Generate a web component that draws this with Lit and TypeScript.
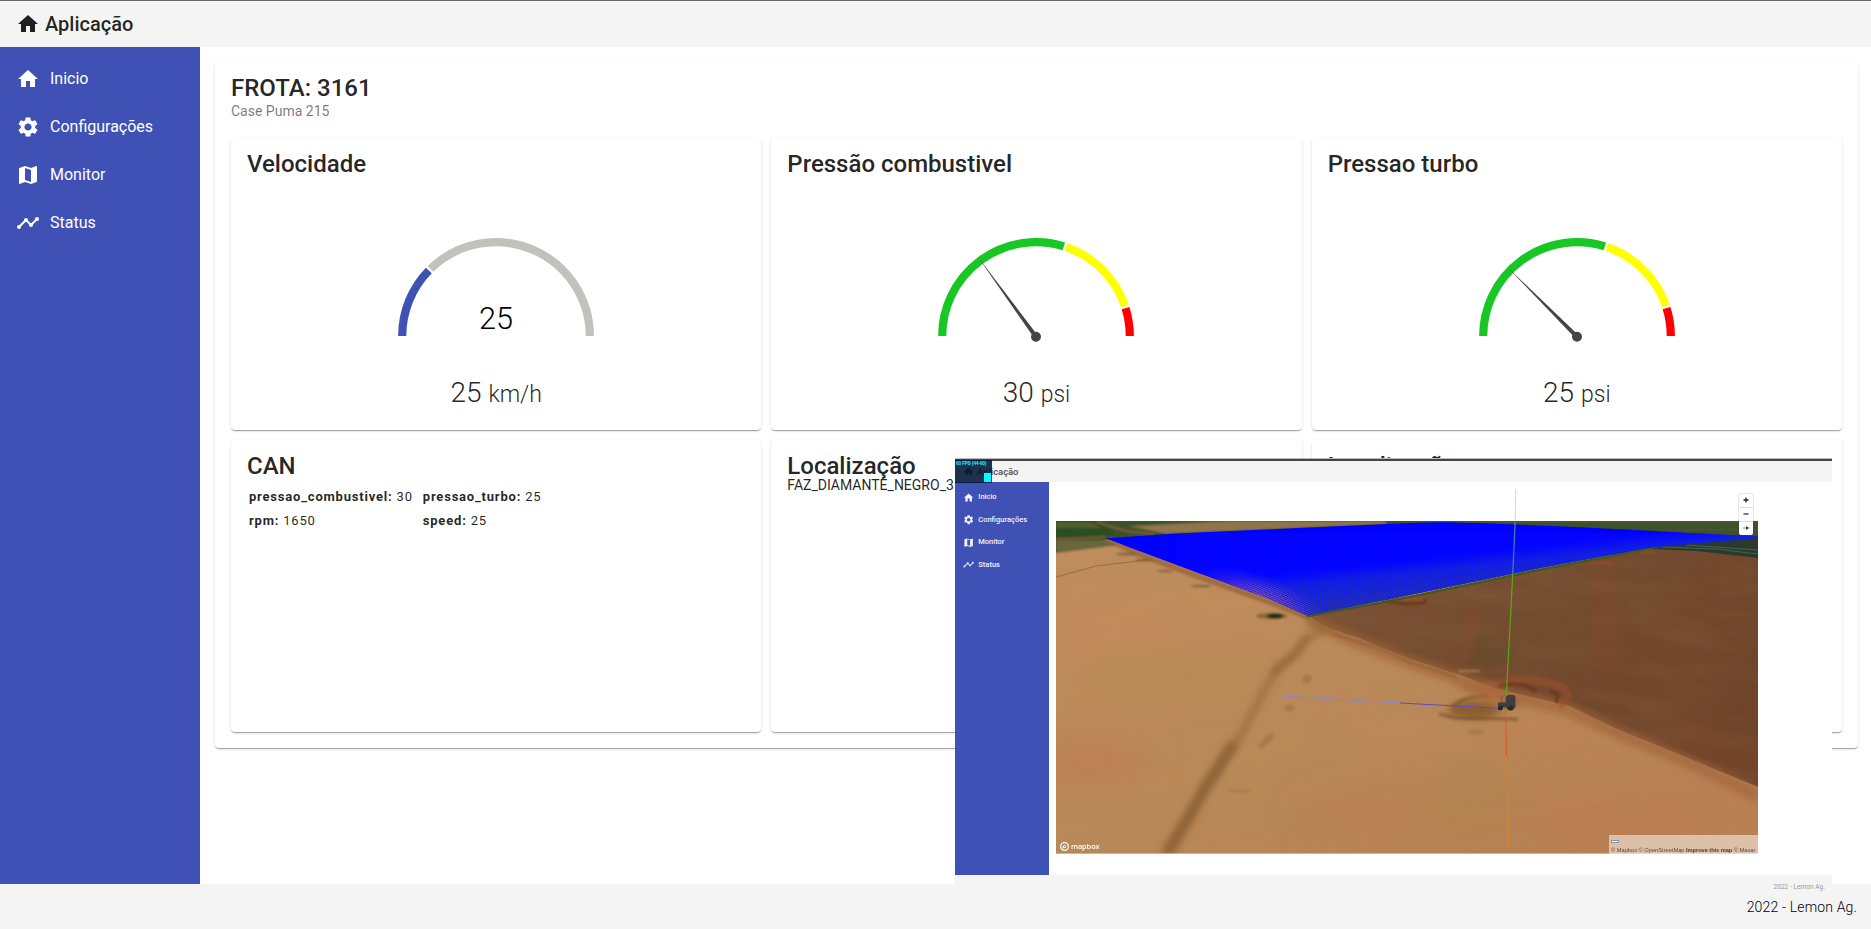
import { LitElement, html, css, svg } from "lit";
import { customElement, property } from "lit/decorators.js";

const ICONS: Record<string, string> = {
  home: "M10 20v-6h4v6h5v-8h3L12 3 2 12h3v8z",
  settings:
    "M19.14 12.94c.04-.3.06-.61.06-.94 0-.32-.02-.64-.07-.94l2.03-1.58c.18-.14.23-.41.12-.61l-1.92-3.32c-.12-.22-.37-.29-.59-.22l-2.39.96c-.5-.38-1.03-.7-1.62-.94l-.36-2.54c-.04-.24-.24-.41-.48-.41h-3.84c-.24 0-.43.17-.47.41l-.36 2.54c-.59.24-1.13.57-1.62.94l-2.39-.96c-.22-.08-.47 0-.59.22L2.74 8.87c-.12.21-.08.47.12.61l2.03 1.58c-.05.3-.09.63-.09.94s.02.64.07.94l-2.03 1.58c-.18.14-.23.41-.12.61l1.92 3.32c.12.22.37.29.59.22l2.39-.96c.5.38 1.03.7 1.62.94l.36 2.54c.05.24.24.41.48.41h3.84c.24 0 .44-.17.47-.41l.36-2.54c.59-.24 1.13-.56 1.62-.94l2.39.96c.22.08.47 0 .59-.22l1.92-3.32c.12-.22.07-.47-.12-.61l-2.01-1.58zM12 15.6c-1.98 0-3.6-1.62-3.6-3.6s1.62-3.6 3.6-3.6 3.6 1.62 3.6 3.6-1.62 3.6-3.6 3.6z",
  map: "M20.5 3l-.16.03L15 5.1 9 3 3.36 4.9c-.21.07-.36.25-.36.48V20.5c0 .28.22.5.5.5l.16-.03L9 18.9l6 2.1 5.64-1.9c.21-.07.36-.25.36-.48V3.5c0-.28-.22-.5-.5-.5zM15 19l-6-2.11V5l6 2.11V19z",
  timeline:
    "M23 8c0 1.1-.9 2-2 2-.18 0-.35-.02-.51-.07l-3.56 3.55c.05.16.07.34.07.52 0 1.1-.9 2-2 2s-2-.9-2-2c0-.18.02-.36.07-.52l-2.55-2.55c-.16.05-.34.07-.52.07s-.36-.02-.52-.07l-4.55 4.56c.05.16.07.33.07.51 0 1.1-.9 2-2 2s-2-.9-2-2 .9-2 2-2c.18 0 .35.02.51.07l4.56-4.55C8.02 9.36 8 9.18 8 9c0-1.1.9-2 2-2s2 .9 2 2c0 .18-.02.36-.07.52l2.55 2.55c.16-.05.34-.07.52-.07s.36.02.52.07l3.55-3.56C19.02 8.35 19 8.18 19 8c0-1.1.9-2 2-2s2 .9 2 2z",
};

const NAV = [
  { icon: "home", label: "Inicio" },
  { icon: "settings", label: "Configurações" },
  { icon: "map", label: "Monitor" },
  { icon: "timeline", label: "Status" },
];

@customElement("app-icon")
export class AppIcon extends LitElement {
  @property() name = "home";
  static styles = css`
    :host { display: block; width: 24px; height: 24px; flex: none; }
    svg { display: block; width: 100%; height: 100%; fill: currentColor; }
  `;
  render() {
    return html`<svg viewBox="0 0 24 24"><path d=${ICONS[this.name]}></path></svg>`;
  }
}

interface Segment { from: number; to: number; color: string }

@customElement("arc-gauge")
export class ArcGauge extends LitElement {
  @property({ attribute: false }) segments: Segment[] = [];
  @property({ type: Number }) value = 0;
  @property({ type: Boolean }) digital = false;
  static styles = css`
    :host { display: block; width: 200px; height: 110px; }
    svg { display: block; }
    .digits { font-family: Roboto, sans-serif; font-weight: 300; font-size: 32px; fill: #000; }
  `;
  private point(pct: number, r: number) {
    const a = Math.PI * (1 - pct / 100);
    return [100 + r * Math.cos(a), 100 - r * Math.sin(a)];
  }
  private arc(s: Segment) {
    const pad = 0.4;
    const [x1, y1] = this.point(s.from + (s.from > 0 ? pad : 0), 93.8);
    const [x2, y2] = this.point(s.to - (s.to < 100 ? pad : 0), 93.8);
    return svg`<path d="M${x1} ${y1}A93.8 93.8 0 0 1 ${x2} ${y2}" fill="none" stroke=${s.color} stroke-width="8.2"></path>`;
  }
  render() {
    return html`<svg width="200" height="110" viewBox="0 0 200 110">
      ${this.segments.map((s) => this.arc(s))}
      ${this.digital
        ? svg`<text class="digits" x="83" y="93" textLength="34" lengthAdjust="spacingAndGlyphs">${this.value}</text>`
        : svg`<g fill="#444" transform="rotate(${this.value * 1.8 - 90} 100 100.8)">
            <path d="M97.8 100.8L100 1.8L102.2 100.8z"></path><circle cx="100" cy="100.8" r="5"></circle></g>`}
    </svg>`;
  }
}

@customElement("field-map")
export class FieldMap extends LitElement {
  static styles = css`
    :host { display: block; position: relative; width: 702px; height: 333px; }
    svg { display: block; overflow: visible; }
    .controls {
      position: absolute; right: 4.5px; top: -27.5px; width: 14px; height: 41px;
      background: #fff; border-radius: 2px; box-shadow: 0 0 0 1px rgba(0, 0, 0, 0.1);
      display: grid; grid-template-rows: repeat(3, 1fr);
    }
    .controls span { display: grid; place-items: center; }
    .controls span + span { border-top: 1px solid #ddd; }
    .brand {
      position: absolute; left: 4px; bottom: 3px; display: flex; align-items: center; gap: 2px;
      font: 600 7.4px/10px "Open Sans", sans-serif; color: #fff; letter-spacing: -0.1px;
    }
    .credits {
      position: absolute; right: 0; bottom: 0; width: 149px; height: 19px; box-sizing: border-box;
      padding: 5px 2px 0; background: rgba(255, 255, 255, 0.5);
      font: 5.7px/8px "Liberation Sans", sans-serif; color: #5a4a3e; white-space: nowrap;
    }
    .chip { width: 6px; height: 1.4px; border: 0.8px solid #7f98a8; background: #fff; margin-bottom: 2.2px; }
    .credits b { color: #4a3c32; font-weight: 700; letter-spacing: -0.06px; }
  `;
  render() {
    return html`<svg width="702" height="333" viewBox="0 0 702 333">
        <defs>
          <clipPath id="frame"><rect width="702" height="333"></rect></clipPath>
          <clipPath id="soilClip"><path d="M251 94L344 77L487 47L594 27L702 30V266L620 232L561 208L511 184L441 168L407 155L354 138L300 116L277 110Z"></path></clipPath>
          <clipPath id="fieldClip"><path d="M50 17.3L120 12.5L354 2L385 1.3L430 2.3L530 6.5L701 15.5V17L594 26.5L487 46.5L344 76L251 94.5L211 77L141 51.5L75 27Z"></path></clipPath>
          <linearGradient id="sand" x1="0" y1="0" x2=".8" y2="1">
            <stop offset="0" stop-color="#c08d5e"></stop><stop offset=".3" stop-color="#bf8c5c"></stop>
            <stop offset=".6" stop-color="#b98958"></stop><stop offset="1" stop-color="#ba8153"></stop>
          </linearGradient>
          <linearGradient id="soil" x1="0" y1="0" x2="1" y2=".6">
            <stop offset="0" stop-color="#7c5234"></stop><stop offset=".5" stop-color="#734c2f"></stop>
            <stop offset="1" stop-color="#70452c"></stop>
          </linearGradient>
          <linearGradient id="fade" gradientUnits="userSpaceOnUse" x1="318" y1="42" x2="323" y2="88">
            <stop offset="0" stop-color="#1c38c4" stop-opacity="0"></stop>
            <stop offset=".3" stop-color="#2444b0" stop-opacity=".6"></stop>
            <stop offset="1" stop-color="#34447c" stop-opacity="1"></stop>
          </linearGradient>
          <radialGradient id="violet" gradientUnits="userSpaceOnUse" cx="0" cy="0" r="1" gradientTransform="translate(206 80) rotate(20) scale(72 26)">
            <stop offset="0" stop-color="#b0648c" stop-opacity="1"></stop>
            <stop offset=".5" stop-color="#8a5aa8" stop-opacity=".6"></stop>
            <stop offset="1" stop-color="#3a38e0" stop-opacity="0"></stop>
          </radialGradient>
          <pattern id="mesh" width="3.6" height="3" patternUnits="userSpaceOnUse" patternTransform="skewX(28) rotate(-8)">
            <path d="M0 0L3.6 3" stroke="#0a0aff" stroke-width="1"></path>
          </pattern>
          <filter id="b1" x="-50%" y="-50%" width="200%" height="200%"><feGaussianBlur stdDeviation="1.2"></feGaussianBlur></filter>
          <filter id="b3" x="-50%" y="-50%" width="200%" height="200%"><feGaussianBlur stdDeviation="3.4"></feGaussianBlur></filter>
          <filter id="b12" x="-50%" y="-50%" width="200%" height="200%"><feGaussianBlur stdDeviation="14"></feGaussianBlur></filter>
          <filter id="grainA" x="0" y="0" width="100%" height="100%">
            <feTurbulence type="fractalNoise" baseFrequency=".009 .045" numOctaves="3" seed="7"></feTurbulence>
            <feColorMatrix values="0 0 0 0 .42  0 0 0 0 .25  0 0 0 0 .12  1.1 0 0 0 -.4"></feColorMatrix>
          </filter>
        </defs>
        <g clip-path="url(#frame)">
          <rect width="702" height="333" fill="url(#sand)"></rect>
          <g filter="url(#b12)">
            <ellipse cx="20" cy="240" rx="80" ry="30" fill="#c07f53" opacity=".6"></ellipse>
            <ellipse cx="30" cy="110" rx="90" ry="30" fill="#c68a5c" opacity=".7"></ellipse>
            <ellipse cx="110" cy="155" rx="90" ry="22" fill="#b68a52" opacity=".6"></ellipse>
            <ellipse cx="340" cy="210" rx="60" ry="16" fill="#c2865b" opacity=".7"></ellipse>
            <ellipse cx="300" cy="290" rx="60" ry="20" fill="#bb8155" opacity=".6"></ellipse>
            <ellipse cx="420" cy="290" rx="50" ry="35" fill="#b08350" opacity=".6"></ellipse>
            <ellipse cx="550" cy="300" rx="90" ry="25" fill="#bb7e51" opacity=".7"></ellipse>
            <ellipse cx="490" cy="215" rx="60" ry="14" fill="#c28255" opacity=".7"></ellipse>
          </g>
          <rect x="-150" y="-60" width="1000" height="600" filter="url(#grainA)" opacity=".3" transform="rotate(-17 200 160)"></rect>
          <path d="M0 0H702V30L560 34L50 19L0 31Z" fill="#3b522b"></path>
          <path d="M72 5L170 0H330V3L110 13Z" fill="#8f7449" filter="url(#b1)"></path>
          <path d="M0 0H40L60 12L50 18H0Z" fill="#2c4d22" filter="url(#b1)"></path>
          <path d="M0 1H36L46 7H0Z" fill="#525d2d" filter="url(#b1)"></path>
          <path d="M0 19H50L62 24L0 32Z" fill="#69663a" filter="url(#b1)"></path>
          <path d="M40 1L70 10L98 13M0 18L50 16" fill="none" stroke="#8c5c34" stroke-width="2" filter="url(#b1)"></path>
          <path d="M400 1H702M600 9H702" stroke="#6d5630" stroke-width="1" opacity=".7"></path>
          <path d="M52 18L78 31L141 55L211 80L254 97" fill="none" stroke="#8a5930" stroke-width="6" opacity=".6" filter="url(#b1)"></path>
          <g clip-path="url(#soilClip)">
            <path d="M240 94L344 70L594 22H702V280L561 208L441 168L354 138Z" fill="url(#soil)"></path>
            <path d="M530 30L560 25L568 150L540 150Z" fill="#7d4a2f" opacity=".5" filter="url(#b3)"></path>
            <ellipse cx="430" cy="130" rx="30" ry="16" fill="#62492a" opacity=".5" filter="url(#b3)"></ellipse>
            <path d="M410 90L425 90L415 140L395 145Z" fill="#824b31" opacity=".5" filter="url(#b3)"></path>
            <path d="M560 130L640 250L702 270V240Z" fill="#784529" opacity=".5" filter="url(#b12)"></path>
            <rect x="200" y="-40" width="600" height="400" filter="url(#grainA)" opacity=".22" transform="rotate(8 450 130)"></rect>
          </g>
          <path d="M594 28L620 23L702 15V37L640 30Z" fill="#2a3a2c"></path>
          <path d="M606 26L660 28L702 33M630 24L702 29" fill="none" stroke="#4c6a62" stroke-width="1.1" opacity=".8"></path>
          <path d="M252 98L290 116L354 141L407 159L441 171L511 188L561 211L640 244L704 276" fill="none" stroke="#a0643a" stroke-width="14" opacity=".65" filter="url(#b3)"></path>
          <path d="M275 112L325 128L354 141L400 156" fill="none" stroke="#83592f" stroke-width="2.5" opacity=".5" filter="url(#b1)"></path>
          <path d="M254 96L270 108L250 118L240 132L222 147L208 170L186 212L168 238L145 275L108 333" fill="none" stroke="#845a2c" stroke-width="9" opacity=".38" filter="url(#b3)"></path>
          <path d="M178 222L150 265L132 298L112 333" fill="none" stroke="#7b5329" stroke-width="12" opacity=".5" filter="url(#b3)"></path>
          <path d="M252 115L240 132L216 153" fill="none" stroke="#7d5428" stroke-width="6" opacity=".4" filter="url(#b3)"></path>
          <g fill="#80582c" opacity=".3" filter="url(#b1)">
            <ellipse cx="251" cy="158" rx="5" ry="4"></ellipse><ellipse cx="233" cy="187" rx="5" ry="3.4"></ellipse>
            <ellipse cx="210" cy="220" rx="10" ry="3" transform="rotate(-45 210 220)"></ellipse>
            <ellipse cx="420" cy="211" rx="8" ry="2.4"></ellipse><ellipse cx="184" cy="270" rx="12" ry="2" opacity=".6"></ellipse>
          </g>
          <g fill="#74522a" opacity=".6" filter="url(#b1)">
            <ellipse cx="70" cy="33" rx="10" ry="1.8"></ellipse><ellipse cx="88" cy="39" rx="9" ry="1.6"></ellipse>
            <ellipse cx="109" cy="50" rx="8" ry="1.5"></ellipse><ellipse cx="145" cy="65" rx="10" ry="1.6"></ellipse>
          </g>
          <path d="M0 56L40 45L90 39" fill="none" stroke="#7d5a34" stroke-width="1" opacity=".6"></path>
          <ellipse cx="216" cy="95" rx="16" ry="3.2" fill="#6a5528" opacity=".6" filter="url(#b1)"></ellipse>
          <ellipse cx="219" cy="95" rx="8" ry="2" fill="#1c2a16" filter="url(#b1)"></ellipse>
          <g fill="none" filter="url(#b1)">
            <path d="M330 80L350 83L368 82L370 78" stroke="#6b2f18" stroke-width="1.8"></path>
            <path d="M326 78L365 77" stroke="#96502c" stroke-width="2.5"></path>
            <path d="M532 41L558 42M585 31L600 31" stroke="#9c4a24" stroke-width="1.6"></path>
            <path d="M436 164Q470 152 505 166Q520 176 503 184" stroke="#97502f" stroke-width="8" opacity=".6"></path>
            <path d="M442 166Q462 158 480 170M494 170L502 174L500 182" stroke="#6b3219" stroke-width="2.6" opacity=".85"></path>
            <path d="M396 186Q410 174 432 175M383 193L400 197L462 198" stroke="#6e4722" stroke-width="3.6" opacity=".5"></path>
            <path d="M402 150L424 150" stroke="#b58a54" stroke-width="3.4" opacity=".5"></path>
          </g>
          <ellipse cx="418" cy="189" rx="26" ry="9" fill="#75491f" opacity=".65" filter="url(#b3)"></ellipse>
          <path d="M400 164L436 160L470 182L440 190Z" fill="#a9683a" opacity=".6" filter="url(#b3)"></path>
          <path d="M251 95.5L344 78L487 48.2L598 27" fill="none" stroke="#3f5a1c" stroke-width="2"></path>
          <g clip-path="url(#fieldClip)">
            <rect width="702" height="100" fill="#0000ff"></rect>
            <path d="M50 50L360 30L480 20L600 10L702 8V100H50Z" fill="url(#fade)"></path>
            <rect x="50" y="0" width="300" height="100" fill="url(#violet)"></rect>
            <rect x="120" y="12" width="582" height="90" fill="url(#mesh)"></rect>
          </g>
          <rect y="332" width="702" height="1" fill="#e3c4a6" opacity=".7"></rect>
        </g>
        <path d="M459.8 -32L459.2 0" stroke="#b9f57e" stroke-width="1"></path>
        <path d="M459.2 0L456.8 53" stroke="#3f93a8" stroke-width="1.1"></path>
        <path d="M456.8 53L450 180" stroke="#5fa51a" stroke-width="1.2"></path>
        <path d="M226 175L344 182" stroke="#8a84d0" stroke-width="1"></path>
        <path d="M344 182L447 187.5" stroke="#6448c4" stroke-width="1"></path>
        <path d="M449.6 188L450.5 235" stroke="#de5428" stroke-width="1"></path>
        <path d="M450.5 235L452.8 327" stroke="#d6842a" stroke-width="1"></path>
        <g fill="#3c3e42">
          <path d="M450 175.5L452 174H458L459.5 176V186L457 189H452L450 186.5H446L444 189H442V181.5H449.5Z"></path>
          <rect x="445.4" y="174.5" width=".8" height="7" fill="#76553c"></rect>
          <circle cx="444.6" cy="187" r="2.4" fill="#26282b"></circle><circle cx="454.5" cy="187" r="2.6" fill="#26282b"></circle>
        </g>
      </svg>
      <div class="controls">
        <span><svg width="6" height="6"><path d="M3 .5v5M.5 3h5" stroke="#222" stroke-width="1.3"></path></svg></span>
        <span><svg width="6" height="6"><path d="M.5 3h5" stroke="#333" stroke-width="1.3"></path></svg></span>
        <span><svg width="8" height="6"><path d="M0 3L3.6 1.4v3.2z" fill="#bbb"></path><path d="M7.4 3L4 1.2v3.6z" fill="#333"></path></svg></span>
      </div>
      <div class="brand">
        <svg width="9" height="9" viewBox="0 0 9 9"><circle cx="4.5" cy="4.5" r="3.8" fill="#8c6a4c" fill-opacity=".5" stroke="#fff" stroke-width="1.3"></circle><path d="M2.6 6.4Q2 3 5 2.4Q7 3 6.2 5.2Q5 6.8 2.6 6.4z" fill="#fff"></path><circle cx="4.8" cy="4.2" r=".8" fill="#8c6a4c"></circle></svg>
        <span>mapbox</span>
      </div>
      <div class="credits"><div class="chip"></div>© Mapbox © OpenStreetMap <b>Improve this map</b> © Maxar</div>`;
  }
}

@customElement("monitor-window")
export class MonitorWindow extends LitElement {
  static styles = css`
    :host { display: flex; flex-direction: column; width: 877px; height: 437px; background: #fff; }
    .top {
      position: relative; height: 24px; box-sizing: border-box; background: #f4f4f4;
      border-top: 1px solid #bbb; box-shadow: inset 0 2px 0 #454248; display: flex; align-items: center;
      gap: 3px; padding: 2px 0 0 8px; font: 500 9.4px/12px Roboto, sans-serif; color: #4c4c4c;
    }
    .top app-icon { width: 11px; height: 11px; }
    .stats {
      position: absolute; left: 0; top: 1px; width: 37px; height: 23px; background: rgba(0, 20, 50, 0.87);
      font: 900 4.6px/5px "Liberation Sans", sans-serif; color: #0ff; white-space: nowrap;
    }
    .stats span { display: block; padding: 1px 0 0 1px; letter-spacing: -0.08px; }
    .stats i { position: absolute; right: 1px; bottom: 1px; width: 7px; height: 9px; background: #0ff; }
    .body { display: flex; height: 392.5px; }
    nav { width: 93.7px; background: #3f51b5; padding-top: 4px; box-sizing: border-box; }
    .item {
      display: flex; align-items: center; gap: 4.5px; height: 22.5px; padding-left: 7.5px;
      font: 500 7.5px/10px Roboto, sans-serif; color: #f0f1fa;
    }
    .item app-icon { width: 11.3px; height: 11.3px; }
    field-map { margin: 39px 0 0 7.3px; }
    .foot {
      flex: 1; background: #f4f4f4; text-align: right; padding: 5px 7px 0 0;
      font: 6.6px/14px Roboto, sans-serif; color: #999;
    }
  `;
  render() {
    return html`<div class="top"><app-icon name="home"></app-icon>Aplicação
        <div class="stats"><span>60 FPS (44-60)</span><i></i></div></div>
      <div class="body">
        <nav>${NAV.map((n) => html`<div class="item"><app-icon name=${n.icon}></app-icon>${n.label}</div>`)}</nav>
        <field-map></field-map>
      </div>
      <div class="foot">2022 - Lemon Ag.</div>`;
  }
}

const PRESSURE: Segment[] = [
  { from: 0, to: 60, color: "#18c723" },
  { from: 60, to: 90, color: "#ffff00" },
  { from: 90, to: 100, color: "#ff0000" },
];
const SPEED: Segment[] = [
  { from: 0, to: 25, color: "#3f51b5" },
  { from: 25, to: 100, color: "#c2c1bc" },
];
const GAUGES = [
  { title: "Velocidade", value: 25, unit: "km/h", segments: SPEED, digital: true },
  { title: "Pressão combustivel", value: 30, unit: "psi", segments: PRESSURE, digital: false },
  { title: "Pressao turbo", value: 25, unit: "psi", segments: PRESSURE, digital: false },
];
const CAN = [
  ["pressao_combustivel", "30"],
  ["pressao_turbo", "25"],
  ["rpm", "1650"],
  ["speed", "25"],
];

@customElement("app-root")
export class AppRoot extends LitElement {
  static styles = css`
    :host {
      display: grid; grid-template-rows: 47px 1fr 45px; height: 100vh; position: relative; overflow: hidden;
      font-family: Roboto, sans-serif; color: rgba(0, 0, 0, 0.87); background: #fff;
    }
    header {
      box-sizing: border-box; border-top: 1px solid #6a666a; background: #f4f4f4; display: flex; align-items: center;
      gap: 5px; padding-left: 16px; font: 500 20px/24px Roboto, sans-serif;
    }
    .shell { display: flex; min-height: 0; }
    nav { width: 200px; background: #3f51b5; padding-top: 7.5px; box-sizing: border-box; color: #fff; flex: none; }
    .item { display: flex; align-items: center; gap: 10px; height: 48px; padding-left: 16px; font-size: 16px; }
    main { flex: 1; padding: 15px 13px 0 15px; }
    .card {
      border-radius: 4px; background: #fff; padding: 16px; box-sizing: border-box;
      box-shadow: 0 2px 1px -1px rgba(0, 0, 0, 0.2), 0 1px 1px 0 rgba(0, 0, 0, 0.14), 0 1px 3px 0 rgba(0, 0, 0, 0.12);
    }
    .fleet { height: 686px; }
    h2 { margin: 0; font: 500 24px/20px Roboto, sans-serif; }
    .sub { font-size: 14px; line-height: 20px; color: rgba(0, 0, 0, 0.54); margin-top: 3px; }
    .grid { display: grid; grid-template-columns: repeat(3, 1fr); grid-auto-rows: 292px; gap: 10px; margin-top: 17px; }
    .gauge { display: flex; flex-direction: column; }
    arc-gauge { align-self: center; margin-top: 62px; }
    .reading {
      align-self: center; margin-top: 29px; font-size: 28px; line-height: 36px; font-weight: 350; white-space: nowrap;
    }
    .reading small { font-size: 23px; }
    .can {
      display: grid; grid-template-columns: auto auto 1fr; column-gap: 10px; margin: 9px 0 0 2px;
      font-size: 13px; line-height: 24px; letter-spacing: 0.8px;
    }
    .can div:nth-child(odd) { grid-column: 1; }
    .can div:nth-child(even) { grid-column: 2; }
    .can b { font-weight: 700; }
    .place { font-size: 14px; line-height: 18px; white-space: nowrap; }
    footer {
      background: #f4f4f4; text-align: right; padding: 12px 14px 0 0;
      font-size: 14px; line-height: 22px; font-weight: 300; letter-spacing: 0.16px; color: #000;
    }
    monitor-window { position: absolute; left: 955px; top: 458px; }
  `;
  render() {
    return html`
      <header><app-icon name="home"></app-icon>Aplicação</header>
      <div class="shell">
        <nav>${NAV.map((n) => html`<div class="item"><app-icon name=${n.icon}></app-icon>${n.label}</div>`)}</nav>
        <main>
          <section class="card fleet">
            <h2>FROTA: 3161</h2>
            <div class="sub">Case Puma 215</div>
            <div class="grid">
              ${GAUGES.map(
                (g) => html`<article class="card gauge">
                  <h2>${g.title}</h2>
                  <arc-gauge .segments=${g.segments} .value=${g.value} .digital=${g.digital}></arc-gauge>
                  <div class="reading">${g.value} <small>${g.unit}</small></div>
                </article>`
              )}
              <article class="card">
                <h2>CAN</h2>
                <div class="can">${CAN.map(([k, v]) => html`<div><b>${k}:</b> ${v}</div>`)}</div>
              </article>
              <article class="card"><h2>Localização</h2><div class="place">FAZ_DIAMANTE_NEGRO_3</div></article>
              <article class="card"><h2>Localização</h2></article>
            </div>
          </section>
        </main>
      </div>
      <footer>2022 - Lemon Ag.</footer>
      <monitor-window></monitor-window>
    `;
  }
}
